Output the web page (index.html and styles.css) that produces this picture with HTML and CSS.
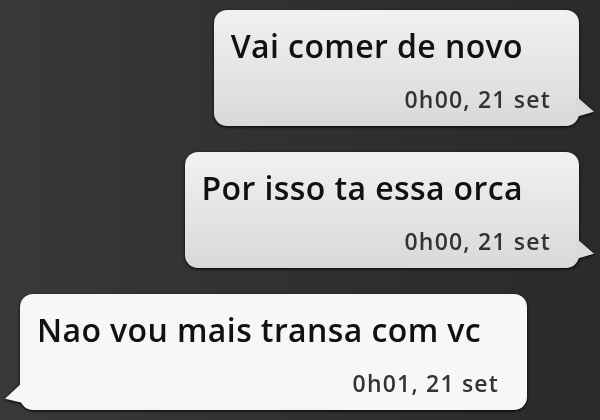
FILE: index.html
```html
<!DOCTYPE html>
<html lang="pt">
<head>
    <meta charset="UTF-8">
    <meta name="viewport" content="width=device-width, initial-scale=1.0">
    <title>Mensagens</title>
    <link rel="stylesheet" href="styles.css">
</head>
<body>
    <div class="chat">
        <div class="msg sent">
            <p class="text">Vai comer de novo</p>
            <p class="time">0h00, 21 set</p>
        </div>
        <div class="msg sent">
            <p class="text">Por isso ta essa orca</p>
            <p class="time">0h00, 21 set</p>
        </div>
        <div class="msg received">
            <p class="text">Nao vou mais transa com vc</p>
            <p class="time">0h01, 21 set</p>
        </div>
    </div>
</body>
</html>
```

FILE: styles.css
```css
body {
    margin: 0;
    height: 420px;
    overflow: hidden;
    font-family: "Open Sans", "DejaVu Sans", sans-serif;
    background: linear-gradient(to right, #393939 0%, #313131 45%, #2a2a2a 100%);
}
.chat {
    display: flex;
    flex-direction: column;
    align-items: flex-end;
    gap: 26px;
    padding: 10px 21px 0 20px;
}
.msg {
    position: relative;
    padding: 0 28px 0 17px;
    border-radius: 13px;
    background: linear-gradient(to bottom, #f1f1f1, #d9d9d9);
    filter: drop-shadow(0 1px 1.5px rgba(0, 0, 0, 0.95));
}
.msg.received {
    align-self: flex-start;
    background: #f7f7f7;
}
/* bico do balão */
.msg::after {
    content: "";
    position: absolute;
    bottom: 9px;
    width: 18px;
    height: 21px;
}
.msg.sent::after {
    right: -15px;
    background: #dadada;
    clip-path: polygon(0 0, 100% 75%, 0 100%);
}
.msg.received::after {
    left: -15px;
    bottom: 7px;
    background: #f7f7f7;
    clip-path: polygon(100% 0, 0 80%, 100% 100%);
}
.text {
    margin: 0 28px 0 0;
    padding-top: 17px;
    font-size: 32px;
    line-height: 37px;
    font-weight: 600;
    letter-spacing: 0.4px;
    color: #111;
}
.msg.received .text {
    margin-right: 18px;
}
.time {
    margin: 22px 0 0;
    padding-bottom: 14px;
    text-align: right;
    font-size: 23px;
    line-height: 26px;
    font-weight: 600;
    letter-spacing: 1.2px;
    color: #333;
}
```
